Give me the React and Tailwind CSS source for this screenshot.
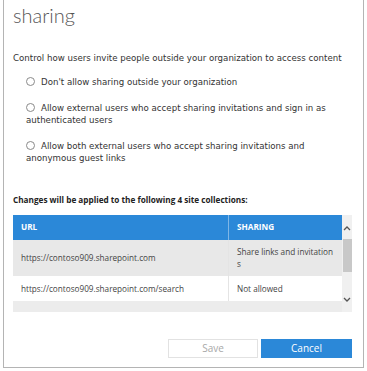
import React from "react";

const verdana = { fontFamily: '"DejaVu Sans", Verdana, sans-serif' };

const options = [
  "Don't allow sharing outside your organization",
  "Allow external users who accept sharing invitations and sign in as authenticated users",
  "Allow both external users who accept sharing invitations and anonymous guest links",
];

const rows = [
  { url: "https://contoso909.sharepoint.com", sharing: "Share links and invitation s", shaded: true },
  { url: "https://contoso909.sharepoint.com/search", sharing: "Not allowed", shaded: false },
];

const Radio = () => (
  <span className="inline-block w-[9px] h-[9px] rounded-full border border-[#8a8a8a] bg-white align-[-1px] mr-[6px]"></span>
);

const App = () => {
  return (
    <div className="w-[367px] h-[371px] bg-white overflow-hidden">
      <div className="ml-[3px] w-[361px] h-[368px] border-x border-b border-[#b4b4b4] flex flex-col pl-[9px] pr-[11px]">
        <h1 className="font-['Lato',sans-serif] font-light text-[20px] leading-[26px] text-[#555] mt-[2px]">sharing</h1>

        <p style={verdana} className="text-[8.65px] leading-[12px] text-[#333] mt-[24px] whitespace-nowrap">
          Control how users invite people outside your organization to access content
        </p>

        <div style={verdana} className="text-[8.65px] leading-[12px] text-[#333] pl-[13px] pr-[24px] mt-[12px] flex flex-col gap-[14px]">
          {options.map((o) => (
            <div key={o}>
              <Radio />
              {o}
            </div>
          ))}
        </div>

        <p className="font-['Open_Sans',sans-serif] text-[8.2px] leading-[12px] font-bold text-[#222] mt-[30px]">
          Changes will be applied to the following 4 site collections:
        </p>

        <div className="mt-[9px] flex bg-[#ececec] h-[97px] font-['Open_Sans',sans-serif] text-[8.2px] text-[#444]">
          <div className="w-[329px] flex flex-col">
            <div className="flex h-[25px] bg-[#2b88d8] text-white font-bold items-center">
              <div className="w-[216px] pl-[8px] border-r border-[#7fb6e6] h-full flex items-center">URL</div>
              <div className="flex-1 pl-[8px]">SHARING</div>
            </div>
            {rows.map((r) => (
              <div
                key={r.url}
                className={`flex ${r.shaded ? "h-[36px] bg-[#e8e8e8]" : "h-[25px] bg-white"} items-center leading-[12px]`}
              >
                <div className="w-[216px] pl-[8px] h-full flex items-center border-r border-[#e4e4e4]">{r.url}</div>
                <div className="flex-1 pl-[8px] pr-[4px]">{r.sharing}</div>
              </div>
            ))}
          </div>
          <div className="w-[10px] bg-[#f0f0f0] flex flex-col items-center">
            <svg width="8" height="6" viewBox="0 0 8 6" className="mt-[10px]">
              <path d="M1 5 L4 2 L7 5" fill="none" stroke="#555" strokeWidth="1.3" />
            </svg>
            <div className="w-[9px] h-[33px] bg-[#c8c8c8] mt-[8px]"></div>
            <svg width="8" height="6" viewBox="0 0 8 6" className="mt-[25px]">
              <path d="M1 1 L4 4 L7 1" fill="none" stroke="#555" strokeWidth="1.3" />
            </svg>
          </div>
        </div>

        <div className="mt-[27px] flex justify-end gap-[3px] font-['Open_Sans',sans-serif] text-[10px]">
          <button className="w-[90px] h-[19px] border border-[#e2e2e2] bg-white text-[#a8a8a8]">Save</button>
          <button className="w-[91px] h-[19px] bg-[#2b88d8] text-white">Cancel</button>
        </div>
      </div>
    </div>
  );
};

export default App;
